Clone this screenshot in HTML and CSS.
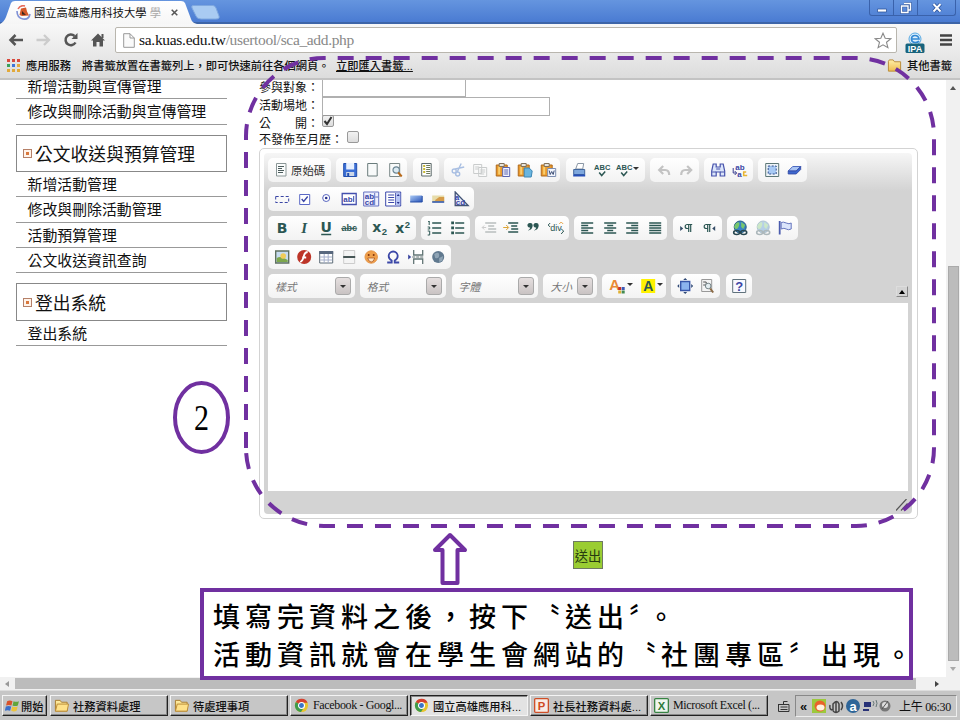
FILE: index.html
```html
<!DOCTYPE html>
<html lang="zh-Hant">
<head>
<meta charset="utf-8">
<title>國立高雄應用科技大學</title>
<link rel="stylesheet" href="styles.css">
</head>
<body>
<svg class="defs" width="0" height="0">
<defs>
<linearGradient id="gb" x1="0" y1="0" x2="1" y2="1"><stop offset="0" stop-color="#a9c9f5"/><stop offset="1" stop-color="#2a55b8"/></linearGradient>
<linearGradient id="gf" x1="0" y1="0" x2="0" y2="1"><stop offset="0" stop-color="#fff0a8"/><stop offset="1" stop-color="#efbd50"/></linearGradient>
<symbol id="doc" viewBox="0 0 16 16"><path d="M3.500 1.500h9.500v12.500h-9.500z" fill="#f8fafa" stroke="#6a7c7c"/></symbol>
<symbol id="src" viewBox="0 0 16 16"><path d="M3.500 1.500h9.500v12.500h-9.500z" fill="#fafcfc" stroke="#8b9797"/><path d="M5 4.500h6M5 6.500h4M5 8.500h6M5 10.500h5" stroke="#4c5c5c"/></symbol>
<symbol id="save" viewBox="0 0 16 16"><path d="M1.500 1.500h13v13h-13z" fill="#3c6fd6" stroke="#234fae"/><path d="M4 1h8v6.500h-8z" fill="#e8f1ff"/><path d="M4 10h8v4h-8z" fill="#cdd7e7"/><path d="M5 11h2v3h-2z" fill="#234fae"/></symbol>
<symbol id="prev" viewBox="0 0 16 16"><path d="M2.500 1.500h10v13h-10z" fill="#f8fafa" stroke="#7b8888"/><circle cx="9" cy="8" r="3.200" fill="#dbeaf2" stroke="#6b8593" stroke-width="1.200"/><path d="M11 10.500l3.500 4" stroke="#b86a1b" stroke-width="2"/></symbol>
<symbol id="tpl" viewBox="0 0 16 16"><path d="M3.500 1.500h9.500v12.500h-9.500z" fill="#fff" stroke="#5d6a6a"/><path d="M5 4h2M5 7h2M5 10h2" stroke="#c8b830" stroke-width="2"/><path d="M8 3.500h4M8 5.500h4M8 7.500h4M8 9.500h4M8 11.500h4" stroke="#6d7a5a"/></symbol>
<symbol id="cut" viewBox="0 0 16 16"><g fill="none" stroke="#a9bfe2" stroke-width="1.400"><path d="M11 1.500L7 10M5 7l9-2"/><circle cx="4" cy="9" r="2"/><circle cx="7.500" cy="12" r="2"/></g></symbol>
<symbol id="copy" viewBox="0 0 16 16"><g fill="#fafafa" stroke="#c9cccc"><path d="M1.500 2.500h8v9h-8zM6.500 5.500h8v9h-8z"/><path d="M3 5h4M3 7h3M8 8h5M8 10h5M8 12h4"/></g></symbol>
<symbol id="clip" viewBox="0 0 16 16"><path d="M1 3h11v11h-11z" fill="#e99a2d" stroke="#ae691c"/><path d="M3 4.500h2v8h-2z" fill="#f9cf70"/><path d="M4 1.500h5v3h-5z" fill="#e8e5dc" stroke="#80705a"/></symbol>
<symbol id="paste" viewBox="0 0 16 16"><use href="#clip"/><path d="M7.500 5.500h7v9h-7z" fill="#f2f4ff" stroke="#5863b0"/><path d="M9 8h4M9 10h4M9 12h4" stroke="#5863b0"/></symbol>
<symbol id="pastet" viewBox="0 0 16 16"><use href="#clip"/><path d="M7 6h5l3 3-1 6h-7z" fill="#69b5df" stroke="#3c86b4"/></symbol>
<symbol id="pastew" viewBox="0 0 16 16"><use href="#clip"/><path d="M7.500 6.500h8v8h-8z" fill="#f4f7ff" stroke="#7d8eb0"/><path d="M9 8.500l1 4 1.500-3 1.500 3 1-4" fill="none" stroke="#3b4d74"/></symbol>
<symbol id="print" viewBox="0 0 16 16"><path d="M4.500 7l2-5.500h6l-1 5.500z" fill="#fff" stroke="#8b97a5"/><path d="M2.500 7.500h11v5h-11z" fill="#7fa8dd" stroke="#42679c"/><path d="M2 12.500h12v2h-12z" fill="#264fb8"/></symbol>
<symbol id="spell" viewBox="0 0 16 16"><text x="8" y="7.500" text-anchor="middle" class="t-abc">ABC</text><path d="M5 10.500l2.500 3 3.500-4" fill="none" stroke="#2c5753" stroke-width="1.500"/></symbol>
<symbol id="undo" viewBox="0 0 16 16"><path d="M3 8h6q4 0 4 5M7 4L3 8l4 4" fill="none" stroke="#c3c3c3" stroke-width="2.200"/></symbol>
<symbol id="redo" viewBox="0 0 16 16"><path d="M13 8h-6q-4 0-4 5M9 4l4 4-4 4" fill="none" stroke="#c3c3c3" stroke-width="2.200"/></symbol>
<symbol id="find" viewBox="0 0 16 16"><path d="M3 2h3v3h4v-3h3l1.500 7v5h-4.500v-4h-4v4h-4.500v-5z" fill="#dbe5fa" stroke="#4652ab" stroke-width="1.200"/><path d="M2 10h4M10 10h4M6 7h4" stroke="#4652ab"/></symbol>
<symbol id="repl" viewBox="0 0 16 16"><text x="3" y="7.500" class="t-rep">ab</text><text x="5" y="14.500" class="t-rep">a</text><path d="M1 6v5h3M2.500 9l2 2-2 2" fill="none" stroke="#3a3f90"/><path d="M14 10h-2.500v3.500h3.500" fill="none" stroke="#e8b431" stroke-width="1.500"/></symbol>
<symbol id="selall" viewBox="0 0 16 16"><path d="M1.500 1.500h13v13h-13z" fill="#eef4f8" stroke="#5d7777"/><path d="M4 4h8v8h-8z" fill="#a8caf5" stroke="#314d8a" stroke-dasharray="2 1.500"/></symbol>
<symbol id="erase" viewBox="0 0 16 16"><path d="M2 9l4.500-4.500h8L10 9z" fill="#a9c4f3" stroke="#4c69c0"/><path d="M2 9h8l4.500-4.500v3L10 12H2z" fill="#3d67ce" stroke="#3045a0" stroke-width=".8"/></symbol>
<symbol id="form" viewBox="0 0 16 16"><path d="M1.500 5.500h13v6h-13z" fill="none" stroke="#3a45a5" stroke-dasharray="3 2"/></symbol>
<symbol id="check" viewBox="0 0 16 16"><path d="M3.500 3.500h10v10h-10z" fill="#fff" stroke="#5a68c5"/><path d="M5.500 8l2 2.500 4-5" fill="none" stroke="#3a45a5" stroke-width="1.400"/></symbol>
<symbol id="radio" viewBox="0 0 16 16"><circle cx="8" cy="7" r="3.500" fill="#fff" stroke="#5664bf"/><circle cx="8" cy="7" r="1.300" fill="#27308b"/></symbol>
<symbol id="tf" viewBox="0 0 16 16"><path d="M1 2.500h14v11h-14z" fill="#fff" stroke="#4450ae" stroke-width="1.300"/><text x="2" y="11" class="t-rep">ab</text><path d="M12.500 5v6" stroke="#3a45a5"/></symbol>
<symbol id="ta" viewBox="0 0 16 16"><path d="M.5 1h15v14h-15zM11.500 2v12M12 6h3" fill="#eef1ff" stroke="#6470c0"/><text x="1.500" y="7.500" class="t-rep">ab</text><text x="1.500" y="14" class="t-rep">cd</text></symbol>
<symbol id="sel" viewBox="0 0 16 16"><path d="M.5 1h15v14h-15zM10.500 2v12" fill="#fff" stroke="#3b48ab"/><path d="M3 4h6M3 6.500h6M3 9h6M3 11.500h6" stroke="#3b48ab"/><path d="M11 2h4v12h-4z" fill="#b4c3f5"/><path d="M11.500 5l1.500-2 1.500 2zM11.500 11l1.500 2 1.500-2z" fill="#27308b"/></symbol>
<symbol id="btn" viewBox="0 0 16 16"><path d="M2 4.500h12v6.500h-12z" fill="url(#gb)"/><path d="M2 11h12v-6" fill="none" stroke="#244da6"/></symbol>
<symbol id="ibtn" viewBox="0 0 16 16"><path d="M2 4.500h12v6.500h-12z" fill="#e7dca9"/><path d="M5 9l4-3 5 0v4h-9z" fill="#d59b48"/><path d="M2 11h12" stroke="#244da6" stroke-width="1.500"/></symbol>
<symbol id="hid" viewBox="0 0 16 16"><path d="M2 1l13 13.500h-13z" fill="#e9edfa" stroke="#425375" stroke-width="1.300"/><text x="1.500" y="8.500" class="t-rep">a</text><text x="2.500" y="14" class="t-rep">cd</text></symbol>
<symbol id="b" viewBox="0 0 16 16"><text x="8" y="12.500" class="t-b" text-anchor="middle">B</text></symbol>
<symbol id="i" viewBox="0 0 16 16"><text x="8" y="12.500" class="t-i" text-anchor="middle">I</text></symbol>
<symbol id="u" viewBox="0 0 16 16"><text x="8" y="12" class="t-b" text-anchor="middle">U</text><path d="M3 14.500h10" stroke="#2c5753" stroke-width="1.500"/></symbol>
<symbol id="s" viewBox="0 0 16 16"><text x="8" y="11" class="t-s" text-anchor="middle">abc</text><path d="M0 8.500h16" stroke="#2c5753" stroke-width=".8"/></symbol>
<symbol id="sub" viewBox="0 0 16 16"><text x="0" y="11.500" class="t-b">x</text><text x="9.500" y="15" class="t-n">2</text></symbol>
<symbol id="sup" viewBox="0 0 16 16"><text x="0" y="13" class="t-b">x</text><text x="9.500" y="8" class="t-n">2</text></symbol>
<symbol id="ol" viewBox="0 0 16 16"><path d="M6 3h9M6 8h9M6 13h9" stroke="#2c5753" stroke-width="1.300"/><path d="M2 2l1-1v4M1.500 7h2v2h-2M1.500 11h2v4h-2" fill="none" stroke="#2c5753"/></symbol>
<symbol id="ul" viewBox="0 0 16 16"><path d="M6 3h9M6 8h9M6 13h9" stroke="#2c5753" stroke-width="1.300"/><path d="M2 1.500h2.800v2.800h-2.800zM2 6.500h2.800v2.800h-2.800zM2 11.500h2.800v2.800h-2.800z" fill="#2c5753"/></symbol>
<symbol id="outd" viewBox="0 0 16 16"><path d="M4 3h11M7 6h6M7 9h8M4 12h11" stroke="#b9bebe" stroke-width="1.300"/><path d="M1 7.500h4M3 5.500l-2 2 2 2" fill="none" stroke="#ccc"/></symbol>
<symbol id="ind" viewBox="0 0 16 16"><path d="M5 3h10M8 6h6M8 9h7M5 12h10" stroke="#2c5753" stroke-width="1.400"/><path d="M0 7.500h5M3 5l2.500 2.500-2.500 2.500" fill="none" stroke="#dda535"/></symbol>
<symbol id="quote" viewBox="0 0 16 16"><path d="M5 3a2.300 2.300 0 1 0 0 4.500q0 2-2.500 3 5-.5 5-5.200q0-2.300-2.500-2.300M11 3a2.300 2.300 0 1 0 0 4.500q0 2-2.500 3 5-.5 5-5.200q0-2.300-2.500-2.300" fill="#2c5753"/></symbol>
<symbol id="div" viewBox="0 0 16 16"><text x="2" y="11" class="t-div">div</text><path d="M2 3L0 5l2 2M13 9l2.500 2-2.500 3" fill="none" stroke="#2c5753"/><path d="M11 4l2-2 2 2" fill="none" stroke="#e9a748"/></symbol>
<symbol id="al" viewBox="0 0 16 16"><path d="M2 3h12M2 5.500h7M2 8h12M2 10.500h7M2 13h12" stroke="#2c5753" stroke-width="1.300"/></symbol>
<symbol id="ac" viewBox="0 0 16 16"><path d="M2 3h12M5 5.500h6M2 8h12M5 10.500h6M2 13h12" stroke="#2c5753" stroke-width="1.300"/></symbol>
<symbol id="ar" viewBox="0 0 16 16"><path d="M2 3h12M7 5.500h7M2 8h12M7 10.500h7M2 13h12" stroke="#2c5753" stroke-width="1.300"/></symbol>
<symbol id="aj" viewBox="0 0 16 16"><path d="M2 3h12M2 5.500h12M2 8h12M2 10.500h12M2 13h12" stroke="#2c5753" stroke-width="1.300"/></symbol>
<symbol id="ltr" viewBox="0 0 16 16"><path d="M2 6l3 2.500-3 2.500z" fill="#334b66"/><path d="M14 4.500h-5a1.500 1.500 0 0 0 0 4h1M10.500 5v7M12.500 5v7" fill="none" stroke="#2c5753" stroke-width="1.200"/></symbol>
<symbol id="rtl" viewBox="0 0 16 16"><path d="M14 6l-3 2.500 3 2.500z" fill="#334b66"/><path d="M10 4.500h-5a1.500 1.500 0 0 0 0 4h1M6.500 5v7M8.500 5v7" fill="none" stroke="#2c5753" stroke-width="1.200"/></symbol>
<symbol id="link" viewBox="0 0 16 16"><circle cx="8" cy="7" r="6" fill="#3a83c4" stroke="#245c83"/><path d="M4 3q4-2 3 2t-3 4-2-3zM9 2l4 3-2 4-2-2z" fill="#78c76b"/><g fill="none" stroke="#27464f" stroke-width="1.600"><ellipse cx="4.500" cy="12.500" rx="3" ry="2"/><ellipse cx="11.500" cy="12.500" rx="3" ry="2"/></g></symbol>
<symbol id="anchor" viewBox="0 0 16 16"><path d="M2.500 1v13.500" stroke="#4b5cae" stroke-width="1.800"/><path d="M4 2.500q2-1 5 .5t5 0v6q-3 1.500-5 0t-5 0z" fill="#dbe5fb" stroke="#6676be"/></symbol>
<symbol id="img" viewBox="0 0 16 16"><path d="M1.500 2h13v12h-13z" fill="#c7dcf0" stroke="#5f7060" stroke-width="1.400"/><path d="M2.500 13v-4q4-3 11 2v2z" fill="#7ea84c"/><circle cx="9" cy="7" r="2.800" fill="#f0cc58"/></symbol>
<symbol id="flash" viewBox="0 0 16 16"><circle cx="8" cy="8" r="7" fill="#bd3528"/><path d="M11.500 3q-3 0-4 4.500T4 13M6 8.500h4" fill="none" stroke="#fff" stroke-width="1.800"/></symbol>
<symbol id="table" viewBox="0 0 16 16"><path d="M1.500 2.500h13v11.500h-13z" fill="#fff" stroke="#5d6c78"/><path d="M1 2h14v3h-14z" fill="#58687e"/><path d="M2 8h12M2 11h12M6 5v9M10 5v9" stroke="#a4afca"/></symbol>
<symbol id="hr" viewBox="0 0 16 16"><path d="M2.500 1.500h11v13h-11z" fill="#f4f4f4" stroke="#ccc"/><path d="M2 8h12" stroke="#465555" stroke-width="2"/></symbol>
<symbol id="smile" viewBox="0 0 16 16"><circle cx="8" cy="8" r="6.200" fill="#f0a04a" stroke="#e4954a"/><circle cx="5.500" cy="6" r="1" fill="#81350e"/><circle cx="10.500" cy="6" r="1" fill="#81350e"/><path d="M4.500 9h7q-1 4-3.500 4T4.500 9" fill="#fbe3c5" stroke="#a54a14" stroke-width=".7"/></symbol>
<symbol id="omega" viewBox="0 0 16 16"><path d="M2 13.500h4.500v-2Q3.500 10 3.500 7a4.500 4.500 0 0 1 9 0q0 3-3 4.500v2h4.500" fill="none" stroke="#3c48a8" stroke-width="1.800"/></symbol>
<symbol id="pb" viewBox="0 0 16 16"><path d="M5.500 1v5h9v-5M5.500 15v-5h9v5" fill="#fff" stroke="#627575" stroke-width="1.300"/><path d="M4 8h12" stroke="#627575" stroke-dasharray="3 1"/><path d="M0 5.500l3 2.500-3 2.500z" fill="#36429e"/></symbol>
<symbol id="iframe" viewBox="0 0 16 16"><circle cx="8" cy="8" r="6" fill="#60798f"/><path d="M4 5q5-3 5 1T5 9zM9 9l4-2-1 5-3 1z" fill="#8fa4b5"/></symbol>
<symbol id="tc" viewBox="0 0 16 16"><text x="0" y="12" class="t-tc">A</text><path d="M9 9h3v3h-3z" fill="#ca3027"/><path d="M12.500 9h3v3h-3z" fill="#3b58b5"/><path d="M9 12.500h3v3h-3z" fill="#e0b134"/><path d="M12.500 12.500h3v3h-3z" fill="#428a52"/></symbol>
<symbol id="bg" viewBox="0 0 16 16"><path d="M1 1h14v14h-14z" fill="#fff200"/><text x="8" y="12.500" class="t-bg" text-anchor="middle">A</text></symbol>
<symbol id="max" viewBox="0 0 16 16"><path d="M3.500 3.500h9v9h-9z" fill="#8bb3ee" stroke="#3755a8" stroke-width="1.400"/><path d="M8 0l2 2h-4zM8 16l2-2h-4zM0 8l2-2v4zM16 8l-2-2v4z" fill="#304a75"/></symbol>
<symbol id="blk" viewBox="0 0 16 16"><path d="M2.500 1.500h10v12h-10z" fill="#f4f4f4" stroke="#999"/><path d="M4 4h3v3h-3" fill="none" stroke="#555"/><circle cx="9" cy="8" r="2.800" fill="#e4edf0" stroke="#758488"/><path d="M11 10.500l3 4" stroke="#8b6a45" stroke-width="2"/></symbol>
<symbol id="help" viewBox="0 0 16 16"><path d="M1.500 1.500h13v13h-13z" fill="#f8f9ff" stroke="#60727c"/><text x="8" y="12.500" class="t-q" text-anchor="middle">?</text></symbol>
<symbol id="folder" viewBox="0 0 16 16"><path d="M1.500 14v-11.500h5l1.500 2h6v9.500z" fill="url(#gf)" stroke="#a87a2c"/><path d="M1.500 14l2-7.500h12l-1.500 7.500z" fill="#ffe189" stroke="#b98a36"/></symbol>
<symbol id="bmfolder" viewBox="0 0 16 16"><path d="M1.500 14v-10.500l1-1.500h4l1.500 2h6.500v10z" fill="url(#gf)" stroke="#b98a36"/></symbol>
<symbol id="chrome" viewBox="0 0 16 16"><circle cx="8" cy="8" r="7" fill="#e8c42e"/><path d="M8 8L2 4.300A7 7 0 0 1 14.500 5H8z" fill="#d5402f"/><path d="M8 8L2 4.300A7 7 0 0 0 7.500 15l3.300-5.500z" fill="#3f9c4b"/><circle cx="8" cy="8" r="3.200" fill="#3974c8" stroke="#fff" stroke-width="1.200"/></symbol>
</defs>
</svg>

<div class="screen">
  <header class="titlebar">
    <svg class="tabshape" width="240" height="24" viewBox="0 0 240 24"><defs><linearGradient id="tabg" x1="0" y1="0" x2="0" y2="1"><stop offset="0" stop-color="#fff"/><stop offset="1" stop-color="#f6f6f6"/></linearGradient></defs><path d="M0 24Q4 22 6 17L11 3Q12 1 15 1H181Q184 1 185 3L191 19Q192 23 197 24z" fill="url(#tabg)"/><path d="M193 5.500H213Q215 5.500 216 8L219 16Q220 19 216 19H201Q197 19 196 16L192 8Q191 5.500 193 5.500z" fill="#a9cbf2" stroke="#7fa8df"/></svg>
    <div class="tab">
      <svg width="15" height="15" viewBox="0 0 15 15"><path d="M2 4a6 6 0 0 1 7-3" fill="none" stroke="#e56a5a" stroke-width="1.500"/><path d="M1 6q0 7 6 8t7-5" fill="none" stroke="#7f91d6" stroke-width="1.600"/><path d="M3.500 10L5 3.500l5-1 1 4 2 4-7 .5z" fill="#d4582a"/><path d="M6 6l4 4-4-.5z" fill="#39261f"/></svg>
      <span class="tab-title">國立高雄應用科技大學 <span class="fade">學</span></span>
      <svg class="x" width="7" height="7" viewBox="0 0 7 7"><path d="M.7.7l5.600 5.600M6.300.7L.7 6.300" stroke="#555" stroke-width="1.500"/></svg>
    </div>
    <div class="winbtns">
      <span><svg width="12" height="12" viewBox="0 0 12 12"><path d="M1.500 7h9v3h-9z" fill="#fff" stroke="#2f559c" stroke-width=".8"/></svg></span>
      <span><svg width="12" height="12" viewBox="0 0 12 12"><path d="M4 1.500h6.500v6.500h-2M1.500 4h6.500v6.500h-6.500z" fill="none" stroke="#2f559c" stroke-width="2.600"/><path d="M4 1.500h6.500v6.500h-2M1.500 4h6.500v6.500h-6.500z" fill="none" stroke="#fff" stroke-width="1.400"/></svg></span>
      <span><svg width="12" height="12" viewBox="0 0 12 12"><path d="M2.500 2l7 7.500M9.500 2l-7 7.500" stroke="#2f559c" stroke-width="3.600"/><path d="M2.500 2l7 7.500M9.500 2l-7 7.500" stroke="#fff" stroke-width="1.900"/></svg></span>
    </div>
  </header>

  <div class="navbar">
    <svg width="106" height="20" viewBox="0 0 106 20"><path d="M10.500 10h12.500M15.500 5l-5 5 5 5" fill="none" stroke="#555" stroke-width="2.500"/><path d="M36.500 10h12M44 5l5 5-5 5" fill="none" stroke="#ccc" stroke-width="2.300"/><path d="M75.500 12.500a5.300 5.300 0 1 1-1-6.500" fill="none" stroke="#555" stroke-width="2.500"/><path d="M77.500 3v6h-6z" fill="#555"/><path d="M98 3.500l7 7h-2v6h-3.500v-4.500h-3v4.500h-3.500v-6h-2z" fill="#555"/><path d="M101.500 4h2v4h-2z" fill="#555"/></svg>
    <div class="omnibox">
      <svg width="12" height="15" viewBox="0 0 12 15"><path d="M.7.7h6.300l4.300 4.300v9.300H.7zM7 .7v4.300h4.300" fill="#fafafa" stroke="#999"/></svg>
      <span class="url"><b>sa.kuas.edu.tw</b><i>/usertool/sca_add.php</i></span>
      <svg class="star" width="18" height="17" viewBox="0 0 18 17"><path d="M9 1.200l2.200 5.100 5.600.4-4.300 3.600 1.400 5.400L9 12.800l-4.900 2.900 1.400-5.400L1.200 6.700l5.600-.4z" fill="#fff" stroke="#888" stroke-width="1.100"/></svg>
    </div>
    <svg class="ipa" width="20" height="22" viewBox="0 0 20 22"><circle cx="10" cy="7" r="6" fill="#dff0fc" stroke="#58a9e2"/><path d="M6.500 7h7.500q-.5-3.500-4-3.500T6.500 7q0 3.500 4 3.500 2.500 0 3.500-1.500" fill="none" stroke="#3389d4" stroke-width="1.700"/><rect x=".5" y="11.500" width="19" height="9.500" rx="1.500" fill="#17637c"/><text x="10" y="19.500" text-anchor="middle" class="t-ipa">IPA</text></svg>
    <svg class="menu" width="12" height="13" viewBox="0 0 12 13"><path d="M0 1.500h12M0 6h12M0 10.500h12" stroke="#444" stroke-width="2.400"/></svg>
  </div>

  <div class="bookmarks">
    <svg width="13" height="13" viewBox="0 0 13 13"><path d="M0 0h3v3H0zM5 0h3v3H5zM10 0h3v3h-3z" fill="#d8493c"/><path d="M0 5h3v3H0z" fill="#39a05b"/><path d="M5 5h3v3H5z" fill="#3d74d9"/><path d="M10 5h3v3h-3zM0 10h3v3H0zM5 10h3v3H5zM10 10h3v3h-3z" fill="#e2a93a"/></svg>
    <span class="bm1">應用服務</span>
    <span class="bm2">將書籤放置在書籤列上，即可快速前往各個網頁。</span>
    <u>立即匯入書籤...</u>
    <span class="bm-other"><svg width="15" height="15"><use href="#bmfolder"/></svg>其他書籤</span>
  </div>

  <div class="view">
    <main class="page">
      <nav class="side">
        <a>新增活動與宣傳管理</a>
        <a>修改與刪除活動與宣傳管理</a>
        <h3><i></i>公文收送與預算管理</h3>
        <a>新增活動管理</a>
        <a>修改與刪除活動管理</a>
        <a>活動預算管理</a>
        <a>公文收送資訊查詢</a>
        <h3><i></i>登出系統</h3>
        <a>登出系統</a>
      </nav>
      <section class="form">
        <div class="row r1"><label>參與對象：</label><span class="inp w1"></span></div>
        <div class="row r2"><label>活動場地：</label><span class="inp w2"></span></div>
        <div class="row r3"><label>公　　開：</label><span class="cb"><svg width="10" height="10" viewBox="0 0 10 10"><path d="M1.500 5l2.500 3 4.500-7" fill="none" stroke="#333" stroke-width="2"/></svg></span></div>
        <div class="row r4"><label>不發佈至月歷：</label><span class="cb cb2"></span></div>

        <div class="editor">
          <div class="inner">
            <div class="tools">
              <div class="trow">
                <div class="g source"><svg><use href="#src"/></svg><span>原始碼</span></div>
                <div class="g"><svg><use href="#save"/></svg><svg><use href="#doc"/></svg><svg><use href="#prev"/></svg></div>
                <div class="g"><svg><use href="#tpl"/></svg></div>
                <div class="g"><svg><use href="#cut"/></svg><svg><use href="#copy"/></svg><svg><use href="#paste"/></svg><svg><use href="#pastet"/></svg><svg><use href="#pastew"/></svg></div>
                <div class="g"><svg><use href="#print"/></svg><svg><use href="#spell"/></svg><svg><use href="#spell"/></svg><em></em></div>
                <div class="g"><svg><use href="#undo"/></svg><svg><use href="#redo"/></svg></div>
                <div class="g"><svg><use href="#find"/></svg><svg><use href="#repl"/></svg></div>
                <div class="g"><svg><use href="#selall"/></svg><svg><use href="#erase"/></svg></div>
              </div>
              <div class="trow">
                <div class="g"><svg><use href="#form"/></svg><svg><use href="#check"/></svg><svg><use href="#radio"/></svg><svg><use href="#tf"/></svg><svg><use href="#ta"/></svg><svg><use href="#sel"/></svg><svg><use href="#btn"/></svg><svg><use href="#ibtn"/></svg><svg><use href="#hid"/></svg></div>
              </div>
              <div class="trow">
                <div class="g"><svg><use href="#b"/></svg><svg><use href="#i"/></svg><svg><use href="#u"/></svg><svg><use href="#s"/></svg></div>
                <div class="g"><svg><use href="#sub"/></svg><svg><use href="#sup"/></svg></div>
                <div class="g"><svg><use href="#ol"/></svg><svg><use href="#ul"/></svg></div>
                <div class="g"><svg><use href="#outd"/></svg><svg><use href="#ind"/></svg><svg><use href="#quote"/></svg><svg><use href="#div"/></svg></div>
                <div class="g"><svg><use href="#al"/></svg><svg><use href="#ac"/></svg><svg><use href="#ar"/></svg><svg><use href="#aj"/></svg></div>
                <div class="g"><svg><use href="#ltr"/></svg><svg><use href="#rtl"/></svg></div>
                <div class="g"><svg><use href="#link"/></svg><svg class="off"><use href="#link"/></svg><svg><use href="#anchor"/></svg></div>
              </div>
              <div class="trow">
                <div class="g"><svg><use href="#img"/></svg><svg><use href="#flash"/></svg><svg><use href="#table"/></svg><svg><use href="#hr"/></svg><svg><use href="#smile"/></svg><svg><use href="#omega"/></svg><svg><use href="#pb"/></svg><svg><use href="#iframe"/></svg></div>
              </div>
              <div class="trow">
                <div class="g combo"><span>樣式</span><b></b></div>
                <div class="g combo"><span>格式</span><b></b></div>
                <div class="g combo"><span>字體</span><b></b></div>
                <div class="g combo small"><span>大小</span><b></b></div>
                <div class="g colors"><svg><use href="#tc"/></svg><em></em><svg><use href="#bg"/></svg><em></em></div>
                <div class="g"><svg><use href="#max"/></svg><svg><use href="#blk"/></svg></div>
                <div class="g"><svg><use href="#help"/></svg></div>
                <span class="collapse"></span>
              </div>
            </div>
            <div class="content"></div>
            <div class="foot"><svg width="12" height="12" viewBox="0 0 12 12"><path d="M0 11.500L10.500 0M5 11.500l6.500-7" stroke="#555" stroke-width="1.200"/></svg></div>
          </div>
        </div>
        <div class="submit"><button>送出</button></div>
      </section>
    </main>
    <div class="vscroll"><i class="up"></i><span></span><i class="dn"></i></div>
  </div>
  <div class="hscroll"><i class="lf"></i><span></span><i class="rt"></i></div>

  <footer class="taskbar">
    <div class="tb start"><svg width="14" height="14" viewBox="0 0 14 14"><path d="M2 3q2.500-1.500 5 0L6 7Q3.500 6 1 7z" fill="#d9532c"/><path d="M8 3q2.500 1 5 0l-1 4q-2.500 1-5 0z" fill="#62a53b"/><path d="M.8 8q2.500-1 5 0l-1 4Q2.500 11-.2 12z" fill="#3b6fcb"/><path d="M6.800 8q2.500 1 5 0l-1 4q-2.500 1-5 0z" fill="#ecc33b"/></svg><span>開始</span></div>
    <div class="tb"><svg><use href="#folder"/></svg><span>社務資料處理</span></div>
    <div class="tb"><svg><use href="#folder"/></svg><span>待處理事項</span></div>
    <div class="tb"><svg><use href="#chrome"/></svg><span class="fb">Facebook - Googl...</span></div>
    <div class="tb on"><svg><use href="#chrome"/></svg><span>國立高雄應用科...</span></div>
    <div class="tb"><svg viewBox="0 0 16 16"><rect x=".7" y=".7" width="14.600" height="14.600" rx="1" fill="#f8ece6" stroke="#cf4f28" stroke-width="1.400"/><text x="8" y="12.500" text-anchor="middle" class="t-pp">P</text></svg><span>社長社務資料處...</span></div>
    <div class="tb"><svg viewBox="0 0 16 16"><rect x=".7" y=".7" width="14.600" height="14.600" rx="1" fill="#eff7ef" stroke="#388444" stroke-width="1.400"/><text x="8" y="12.500" text-anchor="middle" class="t-xl">X</text></svg><span class="xl">Microsoft Excel (...</span></div>
    <svg class="kb" width="13" height="14" viewBox="0 0 13 14"><path d="M1.500 5.500v7h10.500v-7M6.500 5V2.500h4M3.500 8h7M3.500 10.500h7M1 5.500h11" fill="none" stroke="#333"/></svg>
    <div class="tray">
      <span class="chev">«</span>
      <svg width="80" height="18" viewBox="0 0 80 18"><rect x="1" y="2" width="14" height="14" fill="#9cc93c"/><circle cx="9" cy="9" r="5.500" fill="#e9632b"/><ellipse cx="9.500" cy="10.500" rx="4" ry="3" fill="#fff3df"/><path d="M19 8q-1 5 3 5V7q4-5 6 0v7q-3 3-6 0M25 4v11M30 5q3 4 0 8" fill="none" stroke="#444" stroke-width="1.500"/><circle cx="42" cy="9" r="7" fill="#2e6598"/><text x="42" y="13.500" text-anchor="middle" class="t-a">a</text><path d="M53 5h7v5h-7zM52 12h6v2h-6z" fill="#283277"/><path d="M62 4q2 2 0 5M65 3q2 3 0 7" fill="none" stroke="#677"/><circle cx="74" cy="9" r="5.500" fill="#777"/><circle cx="74" cy="8" r="3" fill="#ddd"/><path d="M71 12l6-8" stroke="#555"/></svg>
      <span class="clock">上午 06:30</span>
    </div>
  </footer>

  <svg class="marks" width="960" height="720" viewBox="0 0 960 720">
    <g fill="none" stroke="#7030a0" stroke-width="4">
      <path d="M246 448V136A78 78 0 0 1 324 58H856A78 78 0 0 1 934 136V448A78 78 0 0 1 856 526H324A78 78 0 0 1 246 448" stroke-dasharray="16 12"/>
      <ellipse cx="201.500" cy="417.500" rx="26.500" ry="34.500" fill="#fff"/>
      <path d="M450 535l15 15h-7.500v33h-15v-33h-7.500z" fill="#fff" stroke-linejoin="round"/>
    </g>
    <text x="194" y="430" textLength="15" lengthAdjust="spacingAndGlyphs" class="t-two">2</text>
  </svg>
  <div class="note">填寫完資料之後，按下〝送出〞。<br>活動資訊就會在學生會網站的〝社團專區〞出現。</div>
</div>
</body>
</html>
```
FILE: styles.css
```css
* { box-sizing: border-box; }
body { margin: 0; font-family: "Liberation Sans", "Noto Sans CJK TC", sans-serif; color: #111; }
svg { display: block; flex: none; }
.defs { position: absolute; }
.screen { position: relative; width: 960px; height: 720px; overflow: hidden; display: flex; flex-direction: column; background: #fff; font-size: 11.25px; white-space: nowrap; }

.titlebar { position: relative; height: 24px; flex: none; display: flex; justify-content: space-between; background: linear-gradient(#6595df, #4a7bd2 92%, #3d65a8 93%); }
.tabshape { position: absolute; left: 0; top: 0; }
.tab { position: relative; display: flex; align-items: center; height: 24px; padding-left: 16px; }
.tab-title { width: 130px; margin-left: 3px; }
.fade { color: #aaa; }
.tab .x { margin-left: 7px; }
.winbtns { display: flex; width: 87px; height: 16px; margin-right: 4px; border: 1px solid #3a62ab; border-top: 0; border-radius: 0 0 3px 3px; }
.winbtns span { flex: 1; display: flex; align-items: center; justify-content: center; }
.winbtns span:nth-child(3) { flex: 1.6; border-left: 1px solid #3a62ab; }
.winbtns span:nth-child(2) { border-left: 1px solid #3a62ab; }

.navbar { height: 31px; flex: none; display: flex; align-items: flex-start; padding: 3px 8px 0 0; background: linear-gradient(#f8f8f8, #e8e8e8); }
.navbar > svg:first-child { margin-top: 3px; }
.omnibox { width: 782px; height: 26px; margin-left: 9px; display: flex; align-items: center; padding: 0 4px 0 7px; background: #fff; border: 1px solid #b9b6ae; border-radius: 2px; }
.url { flex: 1; margin-left: 4px; font: 15.500px "Liberation Serif", serif; }
.url b { font-weight: 400; letter-spacing: -.3px; }
.url i { font-style: normal; color: #888; letter-spacing: -.35px; }
.ipa { margin: 5px 0 0 8px; }
.menu { margin: 7px 0 0 15px; }

.bookmarks { height: 25px; flex: none; display: flex; align-items: center; padding: 0 8px 3px 7px; background: linear-gradient(#e8e8e8, #dcdcdc); border-bottom: 2px solid #c3c3c3; font-weight: 500; }
.bm1 { margin-left: 6px; width: 56px; }
.bm2 { width: 254px; }
.bm-other { margin-left: auto; display: flex; gap: 5px; align-items: center; }

.view { height: 597px; flex: none; display: flex; }
.page { width: 946px; display: flex; overflow: hidden; }
.side { width: 211px; margin: -6px 0 0 16px; flex: none; }
.side a { display: block; height: 25.300px; padding-left: 11.500px; line-height: 26px; font-size: 14.900px; border-bottom: 1px solid #999; }
.side h3 { margin: 10px 0 0; height: 37.500px; display: flex; align-items: center; padding-left: 6px; border: 1px solid #888; font-size: 17.800px; font-weight: 400; }
.side h3 i { width: 9px; height: 9px; margin-right: 3px; border: 1px solid #b58068; background: #d9783c; box-shadow: inset 0 0 0 2px #fff3ea; }
.form { width: 659px; margin-left: 32px; flex: none; }
.row { display: flex; font-size: 12px; line-height: 16px; height: 16px; }
.row label { width: 63px; }
.inp { border: 1px solid #b0b0b0; background: #fff; }
.r1 { height: 17px; }
.r2 { height: 18px; line-height: 19px; }
.r3 { line-height: 18px; }
.r4 { line-height: 18px; height: 17px; }
.w1 { width: 144px; border-top: 0; }
.w2 { width: 228px; height: 19px; }
.cb { width: 12px; height: 12px; border: 1px solid #999; border-radius: 2px; background: linear-gradient(#f2f2f2, #ddd); }
.r4 label { width: 88px; }

.editor { height: 371px; padding: 4px 5px 4px 4px; border: 1px solid #d3d3d3; border-radius: 5px; }
.inner { height: 361px; padding: 5px 4px 0; border-radius: 4px; background: linear-gradient(#f6f6f6, #d3d3d3 38px); }
.tools { height: 145px; }
.trow { height: 29px; display: flex; gap: 5.300px; }
.g { height: 24px; display: flex; align-items: center; padding: 0 1.500px 0 2.500px; border-radius: 5px; background: linear-gradient(#fff, #f3f3f3); flex: none; }
.g svg { width: 22.400px; height: 16px; }
.g .off { opacity: .35; }
.g em { width: 0; height: 0; margin: -3px 4px 0 -2px; border: 3px solid transparent; border-top: 3px solid #333; border-bottom: 0; }
.g.source { width: 63px; padding-left: 3px; }
.source svg { width: 20px; }
.source span { font-size: 11.400px; color: #333; }
.g.combo { width: 86.500px; justify-content: space-between; padding: 0 4px 0 7px; }
.g.small { width: 53.500px; }
.combo span { font-size: 10.800px; font-style: italic; color: #777; }
.combo b { width: 16px; height: 18px; border: 1px solid #aaa; border-radius: 3px; background: linear-gradient(#e5dfdf, #c9c3c3); display: flex; justify-content: center; padding-top: 7px; }
.combo b::after { content: ""; width: 0; height: 0; border: 3px solid transparent; border-top-color: #333; border-bottom: 0; }
.g.colors { width: 64px; padding-left: 4px; }
.collapse { margin: 12px 0 0 auto; width: 12px; height: 11px; border: 1px solid; border-color: #ddd #888 #888 #ddd; display: flex; justify-content: center; padding-top: 3px; }
.collapse::after { content: ""; height: 0; border: 3px solid transparent; border-bottom: 4px solid #000; border-top: 0; }
.content { height: 188px; background: #fff; }
.foot { display: flex; justify-content: flex-end; padding-top: 8px; }
.submit { display: flex; margin: 22px 0 0 314px; }
.submit button { width: 30px; height: 28px; padding: 0; border: 1px solid #6f7a63; background: #9acd32; color: #263a10; font: 13.300px "Noto Sans CJK TC", sans-serif; }

.vscroll { width: 14px; display: flex; flex-direction: column; align-items: center; background: #f1f1f1; }
.vscroll span { width: 11px; height: 395px; margin-top: 176px; background: #bcbcbc; border: 1px solid #aaa; }
.vscroll i, .hscroll i { width: 0; height: 0; border: 3px solid transparent; flex: none; }
.vscroll .up { margin-top: 6px; height: 4px; border-bottom: 4px solid #555; border-top: 0; }
.vscroll .dn { margin-top: 6px; border-top: 4px solid #aaa; border-bottom: 0; }
.hscroll { height: 13px; flex: none; display: flex; align-items: center; background: #f1f1f1; }
.hscroll .lf { margin-left: 5px; border-right: 4px solid #999; border-left: 0; }
.hscroll span { width: 901px; height: 11px; margin-left: 6px; background: #bcbcbc; }
.hscroll .rt { margin-left: 19px; border-left: 4px solid #444; border-right: 0; }

.taskbar { height: 30px; flex: none; display: flex; align-items: flex-start; gap: 2px; padding: 4px 3px 0 2px; background: #c6c6c6; border-top: 1px solid #ddd; }
.tb { width: 118px; height: 21px; display: flex; align-items: center; gap: 4px; padding-left: 3px; border: 1px solid; border-color: #f4f4f4 #222 #222 #f4f4f4; box-shadow: inset -1px -1px #888; font-weight: 500; }
.tb svg { width: 15px; height: 15px; }
.start { width: 45px; margin-right: 1px; padding-left: 2px; gap: 1px; font-weight: 500; }
.on { border-color: #222 #f4f4f4 #f4f4f4 #222; box-shadow: inset 1px 1px #888; background: #e3e3e3; }
.fb, .xl, .clock { font: 12px "Liberation Serif", "Noto Sans CJK TC", serif; }
.fb, .xl { letter-spacing: -.35px; }
.kb { margin: 4px 0 0 7px; }
.tray { flex: 1; height: 22px; margin-left: 3px; display: flex; align-items: center; padding-left: 4px; border: 1px solid; border-color: #888 #eee #eee #888; }
.chev { width: 11px; font-weight: 700; font-size: 13px; }
.clock { margin-left: auto; margin-right: 5px; letter-spacing: -.3px; }

.marks { position: absolute; left: 0; top: 0; pointer-events: none; }
.note { position: absolute; left: 200px; top: 588px; width: 713px; height: 92px; padding: 5px 0 0 9px; border: 4px solid #7030a0; background: #fff; font: 500 27px/38px "Noto Sans CJK TC", sans-serif; letter-spacing: 5px; color: #000; }

text { font-family: "Liberation Sans", sans-serif; }
.t-abc { font-size: 7.500px; font-weight: 700; fill: #2c5753; }
.t-rep { font-size: 8px; font-weight: 700; fill: #3a45a5; }
.t-b { font: 700 14px "DejaVu Sans", sans-serif; fill: #2c5753; }
.t-i { font: italic 700 15px "Liberation Serif", serif; fill: #2c5753; }
.t-s { font-size: 9px; font-weight: 700; fill: #2c5753; }
.t-n { font-size: 9.500px; font-weight: 700; fill: #2c5753; }
.t-div { font-size: 9px; fill: #2c5753; }
.t-tc { font-size: 15px; font-weight: 700; fill: #e98a36; }
.t-bg { font-size: 14px; font-weight: 700; fill: #2c5753; }
.t-q { font-size: 13px; font-weight: 700; fill: #3a45a5; }
.t-ipa { font-size: 9px; font-weight: 700; fill: #fff; }
.t-pp { font-size: 12px; font-weight: 700; fill: #d04a22; }
.t-xl { font-size: 12px; font-weight: 700; fill: #2c7c3a; }
.t-a { font-size: 13px; font-weight: 700; fill: #fff; }
.t-two { font: 35px "Liberation Serif", serif; fill: #000; }
```
